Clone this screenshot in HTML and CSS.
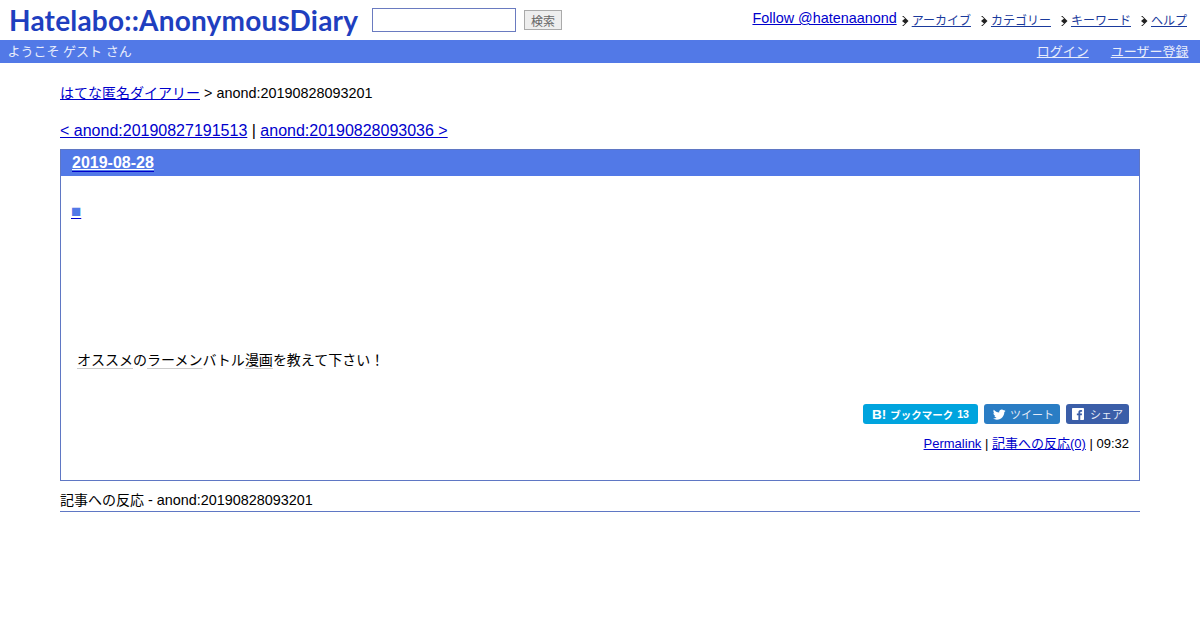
FILE: index.html
```html
<!DOCTYPE html>
<html lang="ja">
<head>
    <meta charset="UTF-8">
    <title>anond:20190828093201</title>
    <link rel="stylesheet" href="styles.css">
</head>
<body>

    <!-- Header -->
    <div class="header">
        <div class="logo">Hatelabo::AnonymousDiary</div>
        <form class="search">
            <input type="text" class="search-box">
            <button type="button" class="search-button">検索</button>
        </form>
        <div class="menu">
            <a href="#" class="follow">Follow @hatenaanond</a>
            <ul>
                <li><svg viewBox="0 0 7 10" class="arrow"><path d="M0 0l3 2.500L0 5l3 2.500L0 10h1.500l5-5-5-5z"/></svg><a href="#">アーカイブ</a></li>
                <li><svg viewBox="0 0 7 10" class="arrow"><path d="M0 0l3 2.500L0 5l3 2.500L0 10h1.500l5-5-5-5z"/></svg><a href="#">カテゴリー</a></li>
                <li><svg viewBox="0 0 7 10" class="arrow"><path d="M0 0l3 2.500L0 5l3 2.500L0 10h1.500l5-5-5-5z"/></svg><a href="#">キーワード</a></li>
                <li><svg viewBox="0 0 7 10" class="arrow"><path d="M0 0l3 2.500L0 5l3 2.500L0 10h1.500l5-5-5-5z"/></svg><a href="#">ヘルプ</a></li>
            </ul>
        </div>
    </div>

    <!-- Welcome bar -->
    <div class="welcome">
        <span>ようこそ ゲスト さん</span>
        <div class="welcome-links">
            <a href="#">ログイン</a>
            <a href="#">ユーザー登録</a>
        </div>
    </div>

    <!-- Main -->
    <div class="main">
        <p class="breadcrumb"><a href="#" class="ja">はてな匿名ダイアリー</a> &gt; anond:20190828093201</p>
        <p class="pager"><a href="#">&lt; anond:20190827191513</a> | <a href="#">anond:20190828093036 &gt;</a></p>

        <div class="day">
            <h2 class="day-title"><a href="#">2019-08-28</a></h2>
            <div class="day-body">
                <a href="#" class="mark"><span>■</span></a>
                <p class="entry"><a href="#" class="keyword">オススメ</a>の<a href="#" class="keyword">ラーメン</a>バトル<a href="#" class="keyword">漫画</a>を教えて下さい！</p>

                <div class="share">
                    <a href="#" class="btn btn-hatena"><b class="btn-b">B!</b> <b>ブックマーク</b> <b class="count">13</b></a>
                    <a href="#" class="btn btn-tweet">
                        <svg viewBox="0 0 24 24" class="btn-icon"><path d="M23.6 4.9c-.9.4-1.8.6-2.8.8 1-.6 1.8-1.5 2.1-2.7-.9.6-2 1-3.1 1.2C18.9 3.200 17.600 2.600 16.200 2.600c-2.700 0-4.800 2.200-4.800 4.800 0 .4 0 .8.100 1.100C7.500 8.300 3.900 6.400 1.500 3.400c-.4.700-.7 1.500-.7 2.400 0 1.700.9 3.200 2.100 4-.8 0-1.500-.2-2.200-.6v.1c0 2.300 1.700 4.300 3.900 4.700-.4.100-.8.200-1.300.2-.3 0-.6 0-.9-.1.6 1.900 2.400 3.300 4.500 3.300-1.700 1.300-3.700 2.100-6 2.100-.4 0-.8 0-1.100-.1 2.100 1.400 4.700 2.200 7.400 2.200 8.900 0 13.700-7.300 13.700-13.700v-.6c.9-.7 1.800-1.500 2.400-2.400z"/></svg>
                        ツイート
                    </a>
                    <a href="#" class="btn btn-share">
                        <svg viewBox="0 0 24 24" class="btn-icon"><path d="M1.500 0h21c.8 0 1.500.7 1.500 1.500v21c0 .8-.7 1.500-1.500 1.500h-6v-9.300h3.100l.5-3.600h-3.600V9.300c0-1 .3-1.800 1.800-1.800h1.900V4.300c-.3 0-1.500-.1-2.800-.1-2.800 0-4.600 1.700-4.600 4.800v2.100H9.700v3.600h3.100V24H1.500C.7 24 0 23.300 0 22.500v-21C0 .7.700 0 1.500 0z"/></svg>
                        シェア
                    </a>
                </div>

                <p class="entry-footer"><a href="#">Permalink</a> | <a href="#">記事への反応(0)</a> | 09:32</p>
            </div>
        </div>

        <h3 class="refs"><span class="ja">記事への反応</span> - anond:20190828093201</h3>
    </div>

</body>
</html>
```

FILE: styles.css
```css
/* General styling */
* {
    margin: 0;
    padding: 0;
    box-sizing: border-box;
}

body {
    background-color: #fff;
    color: #000;
    font-family: "Liberation Sans", "Noto Sans CJK JP", sans-serif;
    font-size: 14.4px;
}

a {
    color: #00c;
}

.ja {
    font-size: 14px;
}

/* Header */
.header {
    display: flex;
    align-items: flex-start;
    height: 40px;
}

.logo {
    width: 372px;
    padding: 3px 0 0 9px;
    color: #1f3fbf;
    font-family: Lato, sans-serif;
    font-size: 28px;
    font-weight: 700;
    letter-spacing: 0.2px;
    line-height: 35px;
    white-space: nowrap;
}

.search {
    display: flex;
    align-items: center;
    gap: 8px;
    padding-top: 8px;
}

.search-box {
    width: 144px;
    height: 24px;
    border: 1px solid #6a7bc0;
    background-color: #fff;
}

.search-button {
    width: 38px;
    height: 20px;
    border: 1px solid #aaa;
    background-color: #eee;
    color: #666;
    font-family: inherit;
    font-size: 12px;
}

.menu {
    display: flex;
    margin-left: auto;
    padding: 10px 13px 0 0;
}

.follow {
    line-height: 16px;
}

.menu ul {
    display: flex;
    gap: 10px;
    list-style-type: none;
    margin-left: 5px;
    padding-top: 4px;
}

.menu li {
    display: flex;
    align-items: center;
    gap: 3px;
    font-size: 12px;
    line-height: 14px;
}

.menu li a {
    color: #1a3a9c;
}

.arrow {
    width: 7px;
    height: 10px;
    fill: #222;
}

/* Welcome bar */
.welcome {
    display: flex;
    justify-content: space-between;
    align-items: center;
    height: 23px;
    padding: 0 11.500px 2px 7.500px;
    background-color: #5279e7;
    color: #e8edfb;
    font-size: 13px;
}

.welcome-links {
    display: flex;
    gap: 22px;
}

.welcome a {
    color: #e8edfb;
}

/* Main */
.main {
    padding: 21px 60px 0;
}

.breadcrumb {
    line-height: 18px;
}

.pager {
    margin-top: 19px;
    font-size: 16px;
    line-height: 19px;
}

.day {
    margin-top: 9px;
    height: 332px;
    border: 1px solid #5f77c4;
}

.day-title {
    height: 26px;
    padding-left: 11px;
    background-color: #5279e7;
    font-size: 16px;
    line-height: 26px;
}

.day-title a {
    display: inline-block;
    border-bottom: 1px solid #00c;
    color: #fff;
    line-height: 17px;
    text-decoration-color: #fff;
}

.day-body {
    padding: 0 10px;
}

.mark {
    display: inline-block;
    margin-top: 27px;
    font-size: 17px;
    line-height: 18px;
}

.mark span {
    color: #5279e7;
}

.entry {
    margin: 129px 0 0 6px;
    font-size: 14px;
    line-height: 20px;
}

.keyword {
    color: #000;
    text-decoration: underline #ccc;
    text-underline-offset: 3px;
}

.share {
    display: flex;
    justify-content: flex-end;
    gap: 6px;
    margin-top: 34px;
}

.btn {
    display: flex;
    align-items: center;
    justify-content: center;
    gap: 4px;
    height: 20px;
    border-radius: 3px;
    color: #e4ebf7;
    font-size: 11px;
    text-decoration: none;
}

.btn-hatena {
    width: 115px;
    background-color: #00a4de;
    color: #fff;
    font-size: 10.5px;
}

.btn-hatena .btn-b {
    font-size: 13.5px;
    font-weight: 900;
}

.btn-tweet {
    width: 76px;
    padding-left: 3px;
    background-color: #2a7dc4;
}

.btn-share {
    width: 63px;
    gap: 6px;
    background-color: #3b5ea8;
}

.btn-icon {
    width: 13px;
    height: 13px;
    fill: #fff;
}

.btn-share .btn-icon {
    width: 12px;
    height: 12px;
}

.entry-footer {
    margin-top: 11px;
    font-size: 13px;
    line-height: 18px;
    text-align: right;
}

/* References */
.refs {
    margin-top: 10px;
    height: 21px;
    border-bottom: 1px solid #5f77c4;
    font-size: 14.4px;
    font-weight: 400;
    line-height: 18px;
}
```
